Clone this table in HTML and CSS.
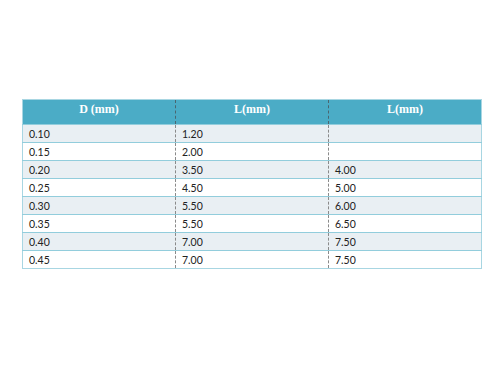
FILE: index.html
```html
<!DOCTYPE html>
<html lang="en">
<head>
  <meta charset="UTF-8">
  <meta name="viewport" content="width=device-width, initial-scale=1.0">
  <title>Wire sizes</title>
  <link rel="stylesheet" href="styles.css">
</head>
<body>
  <table class="sizes">
    <thead>
      <tr>
        <th>D (mm)</th>
        <th>L(mm)</th>
        <th>L(mm)</th>
      </tr>
    </thead>
    <tbody>
      <tr><td>0.10</td><td>1.20</td><td></td></tr>
      <tr><td>0.15</td><td>2.00</td><td></td></tr>
      <tr><td>0.20</td><td>3.50</td><td>4.00</td></tr>
      <tr><td>0.25</td><td>4.50</td><td>5.00</td></tr>
      <tr><td>0.30</td><td>5.50</td><td>6.00</td></tr>
      <tr><td>0.35</td><td>5.50</td><td>6.50</td></tr>
      <tr><td>0.40</td><td>7.00</td><td>7.50</td></tr>
      <tr><td>0.45</td><td>7.00</td><td>7.50</td></tr>
    </tbody>
  </table>
</body>
</html>
```

FILE: styles.css
```css
body {
  margin: 0;
  background-color: #ffffff;
  font-family: Lato, "Liberation Sans", sans-serif;
}

.sizes {
  margin: 99px 0 0 22px;
  width: 460px;
  border-collapse: collapse;
  table-layout: fixed;
  border: 1px solid #a8d6e2;
}

/* header row */
.sizes th {
  height: 22px;
  padding: 2px 0 0;
  vertical-align: top;
  line-height: 14px;
  background-color: #4bacc6;
  color: #ffffff;
  font-family: "Liberation Serif", serif;
  font-size: 12px;
  font-weight: bold;
  text-align: center;
  border-left: 1px dashed #4a6670;
}

.sizes th:first-child,
.sizes td:first-child {
  border-left: none;
}

/* body rows */
.sizes td {
  height: 17px;
  padding: 0 0 0 6px;
  font-size: 10.5px;
  color: #222222;
  border-top: 1px solid #92cddc;
  border-left: 1px dashed #8a8a8a;
}

.sizes tbody tr:nth-child(odd) td {
  background-color: #e9eff3;
}
```
